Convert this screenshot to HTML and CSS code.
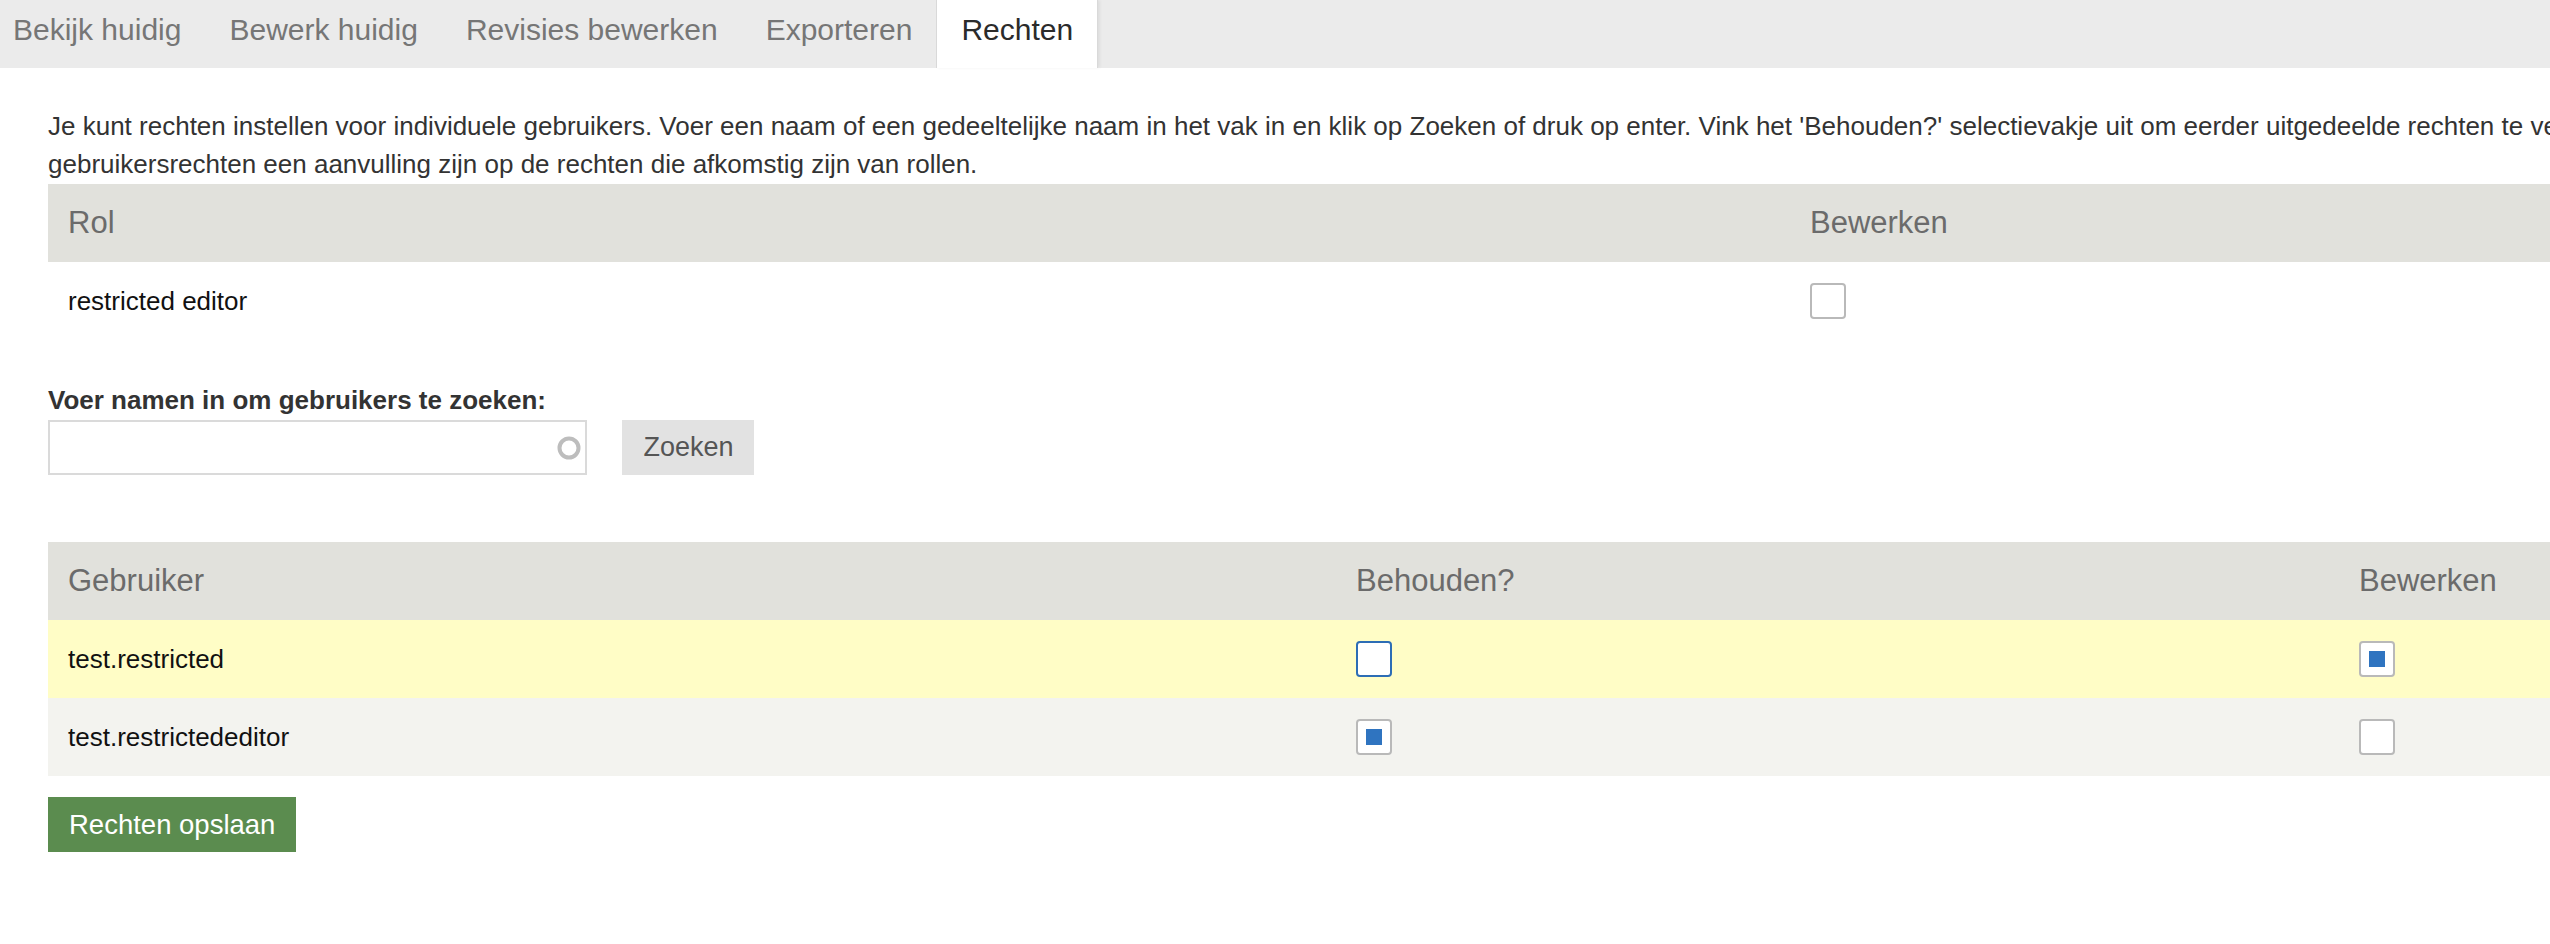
FILE: index.html
```html
<!DOCTYPE html>
<html lang="nl">
<head>
<meta charset="utf-8">
<title>Rechten</title>
<link rel="stylesheet" href="styles.css">
</head>
<body>
<nav class="tabs">
  <a class="tab">Bekijk huidig</a>
  <a class="tab">Bewerk huidig</a>
  <a class="tab">Revisies bewerken</a>
  <a class="tab">Exporteren</a>
  <a class="tab active">Rechten</a>
</nav>
<main class="content">
  <p class="intro">Je kunt rechten instellen voor individuele gebruikers. Voer een naam of een gedeeltelijke naam in het vak in en klik op Zoeken of druk op enter. Vink het 'Behouden?' selectievakje uit om eerder uitgedeelde rechten te verwijderen. Houd er rekening mee dat<br>gebruikersrechten een aanvulling zijn op de rechten die afkomstig zijn van rollen.</p>

  <div class="grid roles">
    <div class="cell head">Rol</div>
    <div class="cell head">Bewerken</div>
    <div class="cell">restricted editor</div>
    <div class="cell"><input type="checkbox" class="cb"></div>
  </div>

  <label class="search-label" for="q">Voer namen in om gebruikers te zoeken:</label>
  <div class="search-row">
    <div class="search-box">
      <input id="q" class="search-input" type="text">
      <svg class="spinner" width="26" height="26" viewBox="0 0 26 26"><circle cx="13" cy="13" r="9.5" fill="none" stroke="#bdbdbd" stroke-width="4"/></svg>
    </div>
    <button class="btn-search">Zoeken</button>
  </div>

  <div class="grid users">
    <div class="cell head">Gebruiker</div>
    <div class="cell head">Behouden?</div>
    <div class="cell head">Bewerken</div>

    <div class="cell hl">test.restricted</div>
    <div class="cell hl"><input type="checkbox" class="cb focus"></div>
    <div class="cell hl"><input type="checkbox" class="cb" checked></div>

    <div class="cell alt">test.restrictededitor</div>
    <div class="cell alt"><input type="checkbox" class="cb" checked></div>
    <div class="cell alt"><input type="checkbox" class="cb"></div>
  </div>

  <button class="btn-save">Rechten opslaan</button>
</main>
</body>
</html>
```

FILE: styles.css
```css
html, body {
  margin: 0;
  padding: 0;
  overflow: hidden;
  background: #ffffff;
}

body {
  font-family: "Liberation Sans", Arial, sans-serif;
  color: #333333;
  width: 2900px;
}

.tabs {
  display: flex;
  height: 68px;
  background: #ebebeb;
}

.tab {
  display: flex;
  align-items: center;
  padding: 0 24px 8px 24px;
  font-size: 30px;
  color: #767676;
}

.tab:first-child {
  padding-left: 13px;
}

.tab.active {
  background: #ffffff;
  color: #2b2b2b;
  border-left: 1px solid #d9d9d9;
  border-right: 1px solid #d9d9d9;
  box-shadow: 2px 0 3px rgba(0, 0, 0, 0.06);
}

.content {
  padding: 0 0 0 48px;
}

.intro {
  margin: 39px 0 1px 0;
  font-size: 26px;
  line-height: 38px;
  white-space: nowrap;
  color: #333333;
}

.grid {
  display: grid;
}

.roles {
  grid-template-columns: 1742px 1fr;
}

.users {
  grid-template-columns: 1288px 1003px 1fr;
  margin-top: 67px;
}

.cell {
  display: flex;
  align-items: center;
  height: 78px;
  padding: 0 20px;
  font-size: 26px;
  color: #111111;
}

.cell.head {
  background: #e1e1dc;
  color: #6b6b6b;
  font-size: 31px;
}

.cell.hl {
  background: #fffdc6;
}

.cell.alt {
  background: #f3f3ef;
}

.cb {
  appearance: none;
  -webkit-appearance: none;
  margin: 0;
  width: 36px;
  height: 36px;
  box-sizing: border-box;
  border: 2px solid #b9b9b9;
  border-radius: 4px;
  background-color: #ffffff;
}

.cb:checked {
  background-image: linear-gradient(#2f74c0, #2f74c0);
  background-size: 16px 16px;
  background-position: center;
  background-repeat: no-repeat;
}

.cb.focus {
  border-color: #2d6db5;
}

.search-label {
  display: block;
  margin-top: 45px;
  font-size: 26px;
  line-height: 30px;
  font-weight: bold;
  color: #333333;
}

.search-row {
  display: flex;
  gap: 35px;
  margin-top: 5px;
}

.search-box {
  position: relative;
  width: 539px;
  height: 55px;
}

.search-input {
  width: 100%;
  height: 100%;
  box-sizing: border-box;
  border: 2px solid #dadada;
  margin: 0;
  padding: 0 12px;
  font-size: 26px;
  font-family: inherit;
  background: #ffffff;
}

.spinner {
  position: absolute;
  right: 5px;
  top: 15px;
}

.btn-search {
  width: 132px;
  height: 55px;
  border: none;
  background: #e2e2e2;
  color: #555555;
  font-family: inherit;
  font-size: 27px;
  padding: 0 0 0 1px;
}

.btn-save {
  display: block;
  margin-top: 21px;
  height: 55px;
  padding: 0 21px;
  border: none;
  background: #5b8c4f;
  color: #ffffff;
  font-family: inherit;
  font-size: 27.5px;
}
```
